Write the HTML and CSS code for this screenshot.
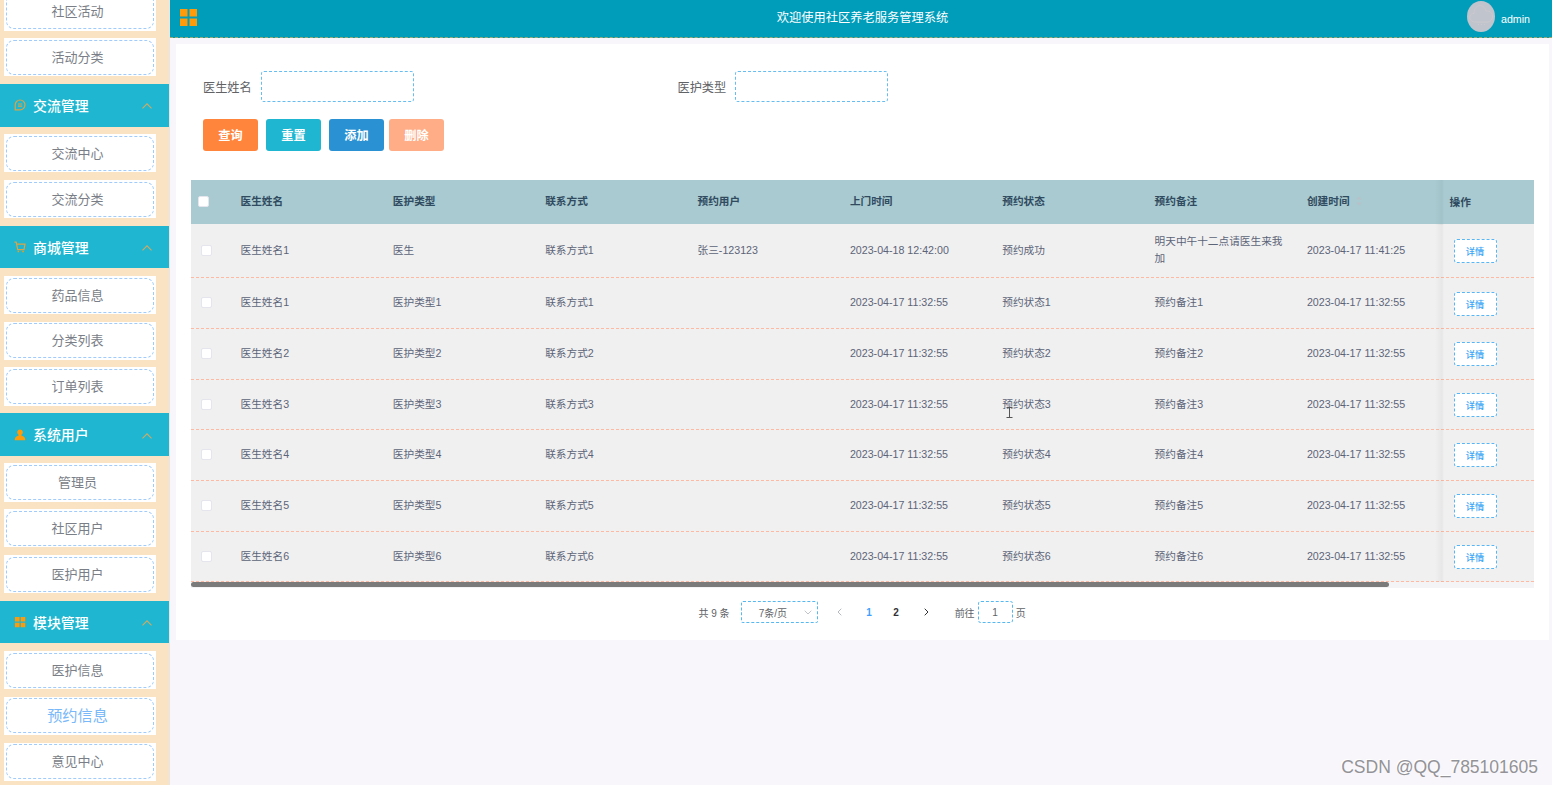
FILE: index.html
```
<!DOCTYPE html>
<html lang="zh-CN">
<head>
  <meta charset="UTF-8">
  <meta name="viewport" content="width=device-width, initial-scale=1.0">
  <title>社区养老服务管理系统</title>
  <link rel="stylesheet" href="styles.css">
</head>
<body>

  <!-- Sidebar -->
  <aside class="sidebar">
    <ul class="menu-list">
      <li><a href="#">社区活动</a></li>
      <li><a href="#">活动分类</a></li>
    </ul>

    <div class="menu-title">
      <svg class="icon" viewBox="0 0 12 12"><path d="M1.2 10.8V6A4.9 4.9 0 1 1 6.1 10.8Z M3.9 5H8.2M3.9 7.2H8.2"/></svg>
      <span>交流管理</span>
      <svg class="arrow" viewBox="0 0 10 6"><path d="M.5 5.4L5 .8L9.5 5.4"/></svg>
    </div>
    <ul class="menu-list">
      <li><a href="#">交流中心</a></li>
      <li><a href="#">交流分类</a></li>
    </ul>

    <div class="menu-title">
      <svg class="icon" viewBox="0 0 12 12"><path d="M.4 1.2H2.2L3.7 8.7H10L11 3.1H2.7"/><path class="solid" d="M3.6 9.8h1.5v1.5H3.6zM8.3 9.8h1.5v1.5H8.3z"/></svg>
      <span>商城管理</span>
      <svg class="arrow" viewBox="0 0 10 6"><path d="M.5 5.4L5 .8L9.5 5.4"/></svg>
    </div>
    <ul class="menu-list">
      <li><a href="#">药品信息</a></li>
      <li><a href="#">分类列表</a></li>
      <li><a href="#">订单列表</a></li>
    </ul>

    <div class="menu-title">
      <svg class="icon" viewBox="0 0 12 12"><path class="solid" d="M6 .6A2.8 2.8 0 0 1 7.5 5.8V6.7C10.3 7.3 11.3 8.7 11.3 11.2H.7C.7 8.7 1.7 7.3 4.5 6.7V5.8A2.8 2.8 0 0 1 6 .6Z"/></svg>
      <span>系统用户</span>
      <svg class="arrow" viewBox="0 0 10 6"><path d="M.5 5.4L5 .8L9.5 5.4"/></svg>
    </div>
    <ul class="menu-list">
      <li><a href="#">管理员</a></li>
      <li><a href="#">社区用户</a></li>
      <li><a href="#">医护用户</a></li>
    </ul>

    <div class="menu-title">
      <svg class="icon" viewBox="0 0 12 12"><path class="solid" d="M.9 1h4.6v4.5H.9zM6.7 1h4.6v4.5H6.7zM.9 6.7h4.6v4.5H.9zM6.7 6.7h4.6v4.5H6.7z"/></svg>
      <span>模块管理</span>
      <svg class="arrow" viewBox="0 0 10 6"><path d="M.5 5.4L5 .8L9.5 5.4"/></svg>
    </div>
    <ul class="menu-list">
      <li><a href="#">医护信息</a></li>
      <li><a href="#" class="active">预约信息</a></li>
      <li><a href="#">意见中心</a></li>
    </ul>
  </aside>

  <div class="main">
    <!-- Header -->
    <header class="topbar">
      <svg class="toggle" viewBox="0 0 18 18"><path d="M0 0h7.5v7.5H0zM9.5 0h7.5v7.5H9.5zM0 9.5h7.5v7.5H0zM9.5 9.5h7.5v7.5H9.5z"/></svg>
      <div class="topbar-title">欢迎使用社区养老服务管理系统</div>
      <div class="user">
        <svg class="avatar" viewBox="0 0 28 31"><ellipse cx="14" cy="15.5" rx="14" ry="15.5"/><path d="M7.5 21C1 20 1.5 12.5 7 12.5C7 3 17 2 19 10C27 9.5 28 20 20.5 21Z M11 23.5h1M14 23.5h1M17 23.5h1"/></svg>
        <span>admin</span>
      </div>
    </header>

    <section class="card">
      <!-- Search form -->
      <div class="search">
        <label>医生姓名<input type="text"></label>
        <label>医护类型<input type="text"></label>
      </div>
      <div class="actions">
        <button class="btn query">查询</button>
        <button class="btn reset">重置</button>
        <button class="btn add">添加</button>
        <button class="btn delete">删除</button>
      </div>

      <!-- Table -->
      <div class="table">
        <div class="row head">
          <div><i class="check"></i></div>
          <div>医生姓名</div>
          <div>医护类型</div>
          <div>联系方式</div>
          <div>预约用户</div>
          <div>上门时间</div>
          <div>预约状态</div>
          <div>预约备注</div>
          <div class="sortable">创建时间<svg class="sort" viewBox="0 0 6 10"><path d="M3 .5L5.5 3.5H.5zM3 9.5L5.5 6.5H.5z"/></svg></div>
          <div class="fixed">操作</div>
        </div>
        <div class="row">
          <div><i class="check"></i></div>
          <div>医生姓名1</div>
          <div>医生</div>
          <div>联系方式1</div>
          <div>张三-123123</div>
          <div>2023-04-18 12:42:00</div>
          <div>预约成功</div>
          <div>明天中午十二点请医生来我加</div>
          <div>2023-04-17 11:41:25</div>
          <div class="fixed"><button class="detail">详情</button></div>
        </div>
        <div class="row">
          <div><i class="check"></i></div>
          <div>医生姓名1</div>
          <div>医护类型1</div>
          <div>联系方式1</div>
          <div></div>
          <div>2023-04-17 11:32:55</div>
          <div>预约状态1</div>
          <div>预约备注1</div>
          <div>2023-04-17 11:32:55</div>
          <div class="fixed"><button class="detail">详情</button></div>
        </div>
        <div class="row">
          <div><i class="check"></i></div>
          <div>医生姓名2</div>
          <div>医护类型2</div>
          <div>联系方式2</div>
          <div></div>
          <div>2023-04-17 11:32:55</div>
          <div>预约状态2</div>
          <div>预约备注2</div>
          <div>2023-04-17 11:32:55</div>
          <div class="fixed"><button class="detail">详情</button></div>
        </div>
        <div class="row">
          <div><i class="check"></i></div>
          <div>医生姓名3</div>
          <div>医护类型3</div>
          <div>联系方式3</div>
          <div></div>
          <div>2023-04-17 11:32:55</div>
          <div>预约状态3<svg class="cursor" viewBox="0 0 7 11"><path d="M.5 .5H6.5M3.5 .5V10.5M.5 10.5H6.5"/></svg></div>
          <div>预约备注3</div>
          <div>2023-04-17 11:32:55</div>
          <div class="fixed"><button class="detail">详情</button></div>
        </div>
        <div class="row">
          <div><i class="check"></i></div>
          <div>医生姓名4</div>
          <div>医护类型4</div>
          <div>联系方式4</div>
          <div></div>
          <div>2023-04-17 11:32:55</div>
          <div>预约状态4</div>
          <div>预约备注4</div>
          <div>2023-04-17 11:32:55</div>
          <div class="fixed"><button class="detail">详情</button></div>
        </div>
        <div class="row">
          <div><i class="check"></i></div>
          <div>医生姓名5</div>
          <div>医护类型5</div>
          <div>联系方式5</div>
          <div></div>
          <div>2023-04-17 11:32:55</div>
          <div>预约状态5</div>
          <div>预约备注5</div>
          <div>2023-04-17 11:32:55</div>
          <div class="fixed"><button class="detail">详情</button></div>
        </div>
        <div class="row">
          <div><i class="check"></i></div>
          <div>医生姓名6</div>
          <div>医护类型6</div>
          <div>联系方式6</div>
          <div></div>
          <div>2023-04-17 11:32:55</div>
          <div>预约状态6</div>
          <div>预约备注6</div>
          <div>2023-04-17 11:32:55</div>
          <div class="fixed"><button class="detail">详情</button></div>
        </div>
        <div class="scrollbar"><div class="thumb"></div></div>
      </div>

      <!-- Pagination -->
      <div class="pagination">
        <span>共 9 条</span>
        <div class="size">7条/页<svg viewBox="0 0 8 5"><path d="M.7 .7L4 4L7.3 .7"/></svg></div>
        <svg class="prev" viewBox="0 0 5 8"><path d="M4.3 .7L1 4L4.3 7.3"/></svg>
        <b class="current">1</b>
        <b>2</b>
        <svg class="next" viewBox="0 0 5 8"><path d="M.7 .7L4 4L.7 7.3"/></svg>
        <span class="jump">前往</span>
        <div class="page-input">1</div>
        <span>页</span>
      </div>
    </section>
  </div>

  <div class="watermark">CSDN @QQ_785101605</div>

</body>
</html>
```
FILE: styles.css
```
* {
  box-sizing: border-box;
}

body {
  display: flex;
  height: 785px;
  margin: 0;
  overflow: hidden;
  background: #f8f6fb;
  font-family: "Liberation Sans", "Noto Sans CJK SC", sans-serif;
  color: #606266;
}

svg {
  display: block;
  fill: none;
}

/* Sidebar */
.sidebar {
  flex: none;
  width: 170px;
  height: 785px;
  overflow: hidden;
  background: #f9e3c3;
  border-right: 1px solid #e6e6e6;
}

.menu-list {
  list-style: none;
  margin: 0;
  padding: 0 0 7.6px 4px;
}

.menu-list:first-child {
  margin-top: -7.6px;
}

.menu-list li {
  width: 152px;
  height: 38.2px;
  margin-bottom: 7.6px;
  padding: 1.6px;
  background: #fff;
}

.menu-list li:last-child {
  margin-bottom: 0;
}

.menu-title + .menu-list {
  padding-top: 7.6px;
}

.menu-list a {
  display: flex;
  align-items: center;
  justify-content: center;
  height: 35px;
  padding: 1px 5px 0 0;
  border: 1px dashed #a0cbfa;
  border-radius: 8px;
  font-size: 13px;
  line-height: 18px;
  color: #7a7e87;
  text-decoration: none;
}

.menu-list a.active {
  font-size: 15.2px;
  color: #79b8f9;
}

.menu-title {
  display: flex;
  align-items: center;
  height: 42.6px;
  padding: 0 17px 0 14px;
  background: #1eb6d0;
  font-size: 13.9px;
  font-weight: 500;
  color: #fff;
}

.menu-title span {
  flex: 1;
  margin: -1px 0 0 7px;
}

.icon {
  width: 12px;
  height: 12px;
  stroke: #dda345;
  stroke-width: 1.2;
}

.icon .solid {
  fill: #ff9a08;
  stroke: none;
}

.arrow {
  width: 10px;
  height: 6px;
  margin-top: 2px;
  stroke: #d2aa62;
  stroke-width: 1.1;
}

/* Header */
.main {
  flex: 1;
}

.topbar {
  display: flex;
  align-items: center;
  justify-content: space-between;
  height: 38px;
  padding: 0 22px 4px 10px;
  background: #009dba;
  border-bottom: 1px dashed #a8a666;
  color: #fff;
}

.toggle {
  width: 18px;
  height: 18px;
  margin-top: 2px;
  fill: #ff9a08;
}

.topbar-title {
  margin-left: 60px;
  font-size: 12.25px;
}

.user {
  display: flex;
  align-items: center;
  gap: 6px;
  font-size: 10.67px;
}

.user span {
  margin-top: 4px;
}

.avatar {
  width: 28px;
  height: 31px;
  fill: #c0c4cc;
}

.avatar path {
  stroke: #cdc9d0;
}

/* Card */
.card {
  height: 596px;
  margin: 6px 3px 0 6px;
  padding: 27px 15px 0;
  background: #fff;
}

.search {
  display: flex;
  padding-left: 12px;
}

.search label {
  display: flex;
  align-items: center;
  width: 474.5px;
  font-size: 12.2px;
}

.search input {
  width: 153px;
  height: 31px;
  margin-left: 9px;
  border: 1px dashed #66bdf2;
  border-radius: 3px;
  background: #fff;
}

.actions {
  display: flex;
  padding: 17px 0 29px 12px;
}

.btn {
  width: 55px;
  height: 32px;
  margin-right: 8px;
  padding: 0;
  border: none;
  border-radius: 3px;
  font-family: inherit;
  font-size: 12.2px;
  font-weight: bold;
  color: #fff;
}

.query {
  background: #ff843c;
}

.reset {
  background: #1eb6d0;
}

.add {
  margin-right: 5px;
  background: #2a91d3;
}

.delete {
  background: #ffad87;
}

/* Table */
.table {
  font-size: 10.67px;
  line-height: 17px;
}

.row {
  display: grid;
  grid-template-columns: 42px repeat(7, 152.35px) 1fr 92px;
  min-height: 50.65px;
  background: #f0f0f0;
  border-bottom: 1px dashed #fdb9a2;
  color: #5c6478;
}

.row > div {
  position: relative;
  display: flex;
  align-items: center;
  padding: 9.4px 7.5px 10px;
}

.row > div:first-child {
  padding-left: 10px;
}

.row > div:nth-child(8) {
  padding-right: 14px;
}

.row.head {
  min-height: 44px;
  background: #a8cad0;
  border-bottom: none;
  font-weight: bold;
  color: #304a60;
}

.row.head > div:first-child {
  padding-left: 7px;
}

.row.head .sortable {
  padding-bottom: 11px;
}

.check {
  width: 11px;
  height: 11px;
  background: #fff;
  border: 1px solid #e4e5ed;
  border-radius: 2px;
}

.sort {
  width: 6px;
  height: 10px;
  margin-left: 6px;
  fill: #b9bfc9;
}

/* shadow along the pinned column */
.fixed::before {
  content: "";
  position: absolute;
  top: 0;
  bottom: -1px;
  left: -7px;
  width: 9px;
  background: linear-gradient(to right, transparent, rgba(0, 0, 0, 0.04) 78%, transparent);
}

.row > .fixed {
  padding-top: 10px;
  padding-bottom: 9.4px;
}

.detail {
  width: 43px;
  height: 24px;
  margin-left: 4px;
  padding: 0;
  background: #fff;
  border: 1px dashed #58b6f7;
  border-radius: 3px;
  font-family: inherit;
  font-size: 9.2px;
  font-weight: 500;
  color: #37a5f7;
}

.cursor {
  position: absolute;
  left: 11px;
  top: 27px;
  width: 7px;
  height: 11px;
  stroke: #555;
}

.scrollbar {
  height: 6px;
  background: #f4f4f7;
}

.thumb {
  width: 1198px;
  height: 5px;
  border-radius: 3px;
  background: #7b7b7b;
}

/* Pagination */
.pagination {
  display: flex;
  align-items: center;
  height: 22px;
  margin: 13px 0 0 507.5px;
  font-size: 10px;
}

.size {
  display: flex;
  align-items: center;
  justify-content: space-between;
  width: 77px;
  height: 22px;
  margin: 0 19px 0 11px;
  padding: 0 5px 0 17px;
  border: 1px dashed #56b8f0;
  border-radius: 2px;
}

.size svg {
  width: 8px;
  height: 5px;
  stroke: #c0c4cc;
}

.prev,
.next {
  width: 5px;
  height: 8px;
  stroke: #b5b9c2;
}

.pagination b {
  width: 27px;
  text-align: center;
  color: #303133;
}

.pagination .current {
  margin-left: 14px;
  color: #409eff;
}

.next {
  margin-left: 14px;
  stroke: #303133;
}

.jump {
  margin-left: 26px;
}

.page-input {
  display: flex;
  align-items: center;
  justify-content: center;
  width: 35px;
  height: 22px;
  margin: 0 3px;
  border: 1px dashed #56b8f0;
  border-radius: 3px;
}

.watermark {
  position: absolute;
  right: 14px;
  bottom: 8px;
  font-size: 17.5px;
  line-height: 20px;
  color: #939397;
  text-shadow: -1px -1px 0 #fff;
}
```
